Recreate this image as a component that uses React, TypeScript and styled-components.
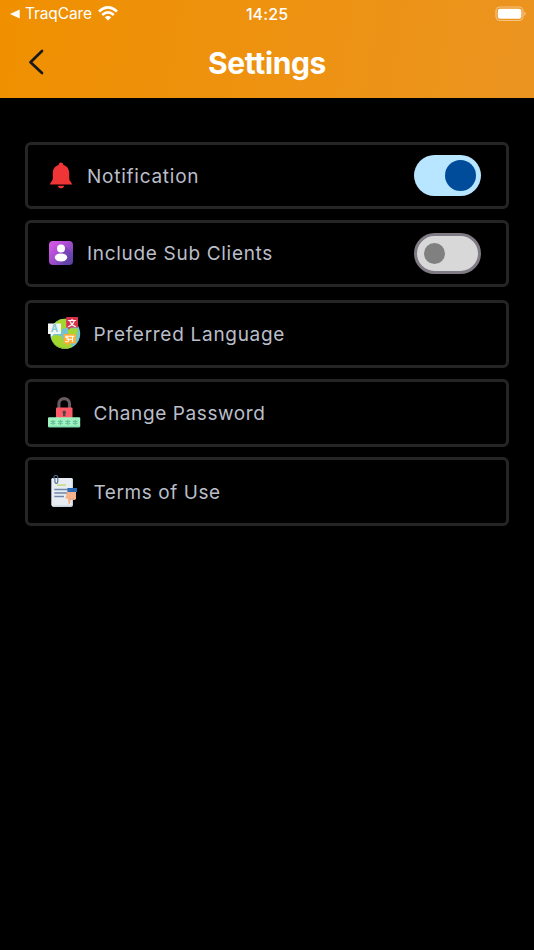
import React from 'react';
import styled, { createGlobalStyle } from 'styled-components';

const GlobalStyle = createGlobalStyle`
  * { box-sizing: border-box; }
  body { margin: 0; background: #000; font-family: Inter, 'Liberation Sans', sans-serif; }
  svg { display: block; flex: none; }
`;

const Screen = styled.div`
  display: flex;
  flex-direction: column;
  min-height: 950px;
  background: #000;
`;

const Header = styled.header`
  height: 98px;
  background: linear-gradient(100deg, #f09000, #eb9420);
`;

const StatusBar = styled.div`
  display: grid;
  grid-template-columns: 1fr auto 1fr;
  align-items: center;
  height: 27px;
  padding: 0 7px 0 10px;
  color: #fff;
`;

const BackToApp = styled.div`
  display: flex;
  align-items: center;
  font-size: 15.5px;
  line-height: 20px;
  letter-spacing: -0.1px;
  span { width: 73px; margin-left: 5px; white-space: nowrap; }
`;

const Clock = styled.time`
  margin-left: -3px;
  font-size: 16px;
  font-weight: 500;
  line-height: 20px;
  letter-spacing: 0.1px;
`;

const Battery = styled.div`
  justify-self: end;
`;

const TitleBar = styled.div`
  display: grid;
  grid-template-columns: 1fr auto 1fr;
  align-items: center;
  height: 72px;
  padding: 0 28px;
`;

const BackButton = styled.button`
  justify-self: start;
  padding: 0;
  border: 0;
  background: none;
  margin-top: -2px;
`;

const Title = styled.h1`
  margin: 0;
  color: #fff;
  font-size: 30px;
  font-weight: 700;
  line-height: 36px;
  letter-spacing: -0.4px;
`;

const List = styled.main`
  display: flex;
  flex-direction: column;
  padding: 44px 25px 0;
`;

const Group = styled.section<{ $gap: number; $top?: number }>`
  display: flex;
  flex-direction: column;
  gap: ${(p) => p.$gap}px;
  margin-top: ${(p) => p.$top ?? 0}px;
`;

const Row = styled.div<{ $link?: boolean }>`
  display: flex;
  align-items: center;
  gap: ${(p) => (p.$link ? 12.5 : 14)}px;
  height: ${(p) => (p.$link ? 68.3 : 67.2)}px;
  padding: 0 25px 0 ${(p) => (p.$link ? 20 : 21)}px;
  border: 3px solid #252526;
  border-radius: 6px;
`;

const Label = styled.span<{ $spacing: number }>`
  flex: 1;
  padding-top: 2px;
  color: #babec9;
  font-size: 19px;
  line-height: 24px;
  letter-spacing: ${(p) => p.$spacing}px;
`;

const Switch = styled.button<{ $on: boolean }>`
  display: flex;
  align-items: center;
  justify-content: ${(p) => (p.$on ? 'flex-end' : 'flex-start')};
  width: 67px;
  height: 41px;
  padding: ${(p) => (p.$on ? '0 5px' : '0 7px')};
  border: ${(p) => (p.$on ? '0' : '3px solid #7f7a84')};
  border-radius: 21px;
  background: ${(p) => (p.$on ? '#b8e5ff' : '#d8d8d8')};
`;

const Knob = styled.span<{ $on: boolean }>`
  width: ${(p) => (p.$on ? 31 : 21)}px;
  height: ${(p) => (p.$on ? 31 : 21)}px;
  border-radius: 50%;
  background: ${(p) => (p.$on ? '#004c9b' : '#808080')};
`;

const WifiIcon = () => (
  <svg width="20" height="15" viewBox="0 0 20 15" fill="none" stroke="#fff" strokeWidth="2.6">
    <path d="M1 5.5Q10-2.6 19 5.5" />
    <path d="M4.2 8.9Q10 3.8 15.8 8.9" />
    <path d="M6.7 11.3Q10 8.5 13.3 11.3L10 14.6Z" fill="#fff" stroke="none" />
  </svg>
);

const BatteryIcon = () => (
  <svg width="32" height="16" viewBox="0 0 32 16">
    <rect x="1" y="1" width="27" height="13.5" rx="4" fill="none" stroke="#fff" strokeOpacity=".45" strokeWidth="1.2" />
    <rect x="2.8" y="2.8" width="23.6" height="10" rx="2.3" fill="#fff" />
    <path d="M29.4 5.5Q32 7.7 29.4 10Z" fill="#fff" fillOpacity=".5" />
  </svg>
);

const BellIcon = () => (
  <svg width="24" height="27" viewBox="0 0 24 27" fill="#ef3535">
    <path d="M12 .5C10.5.5 9.7 1.6 9.6 2.9 5.6 4 3.8 7.2 3.8 11.2V16.5C3.8 19.1 1.3 20.2.8 22.6H23.2C22.7 20.2 20.2 19.1 20.2 16.5V11.2C20.2 7.2 18.4 4 14.4 2.9 14.3 1.6 13.5.5 12 .5ZM8.8 23.8H15.2C14.6 27.2 9.4 27.2 8.8 23.8Z" />
  </svg>
);

const ClientsIcon = () => (
  <svg width="24" height="24" viewBox="0 0 24 24">
    <defs>
      <linearGradient id="clients" x1="0" y1="0" x2="1" y2="1">
        <stop stopColor="#df5bea" />
        <stop offset=".5" stopColor="#a04ccd" />
        <stop offset="1" stopColor="#5145a3" />
      </linearGradient>
    </defs>
    <rect width="24" height="24" rx="4" fill="url(#clients)" />
    <path d="M15 4.5 24 13V20Q24 24 20 24H15L8 20Z" fill="#523e9e" opacity=".35" />
    <circle cx="12" cy="7.4" r="4" fill="#fff" />
    <ellipse cx="12" cy="16.4" rx="6.2" ry="4" fill="#fff" />
  </svg>
);

const LanguageIcon = () => (
  <svg width="33" height="33" viewBox="0 0 33 33" fontFamily="Inter, 'Noto Sans CJK SC', sans-serif" fontWeight="700">
    <defs>
      <clipPath id="globe"><circle cx="17.2" cy="16.8" r="15" /></clipPath>
    </defs>
    <circle cx="17.2" cy="16.8" r="15" fill="#73c2d1" />
    <g clipPath="url(#globe)" fill="#a3d62f">
      <path d="M5 4 12 1 22 2 22 8 18 11 14 12 13 16 8 15 5 10Z" />
      <path d="M3 20 7 18 13 19 16 25 23 27 24 30 19 33 7 31Z" />
      <path d="M20 13 23 11 30 12 29 16 28 22 26 24 20 21Z" />
      <path d="M4 23Q8 31 19 31L17 33H6Z" fill="#84bd32" />
    </g>
    <path d="M0 6.5H13V17H6L3 20V17H0Z" fill="#f3f5f5" />
    <path d="M18.2 0H30V10.5H23L20.3 13V10.5H18.2Z" fill="#d6304b" />
    <path d="M15.5 17H27.7V26.5H21L18.4 29V26.5H15.5Z" fill="#ffad37" />
    <text x="6.4" y="15.3" fontSize="10" textAnchor="middle" fill="#83c8d3">A</text>
    <text x="24.1" y="8.5" fontSize="8.5" textAnchor="middle" fill="#fff">文</text>
    <g fill="none" stroke="#fff" strokeWidth="1.1">
      <path d="M17 19.2H26.3M24.5 19.2V25M17.5 20.7Q21 20 20 22L18.5 22.3Q21.8 22 20.2 24.4 18.5 25.5 17.2 24M20.7 22.3H24.5" />
    </g>
  </svg>
);

const PasswordIcon = () => (
  <svg width="33" height="33" viewBox="0 0 33 33">
    <path d="M10.9 12V7.8C10.9.9 21.5.9 21.5 7.8V12" fill="none" stroke="#675b64" strokeWidth="3.1" />
    <rect x="8" y="11.5" width="16.5" height="11" rx="1" fill="#ff5967" />
    <path d="M15 20.3V17.6A1.8 1.8 0 1 1 17.5 17.6V20.3Z" fill="#54434a" />
    <rect x="0" y="21.2" width="32.2" height="10" rx="1" fill="#9ef3be" />
    <path d="M0 29.7H32.2V30.2Q32.2 31.2 31.2 31.2H1Q0 31.2 0 30.2Z" fill="#80dfae" />
    <g stroke="#65bc9b" strokeWidth="1.1">
      {[5, 12.4, 19.8, 27.2].map((x) => (
        <path key={x} d={`M${x} 23.8V29M${x - 2.3} 25.1L${x + 2.3} 27.7M${x + 2.3} 25.1L${x - 2.3} 27.7`} />
      ))}
    </g>
  </svg>
);

const TermsIcon = () => (
  <svg width="33" height="33" viewBox="0 0 33 33">
    <path d="M3.3 4.4Q3.3 3 5 3H23.5Q25 3 25 4.5V29.5L22.8 32H6Q4 32 3.3 30Z" fill="#e8ecf3" />
    <path d="M5 30.5H23.8V5H25V29.5Q25 32 22.5 32H6Z" fill="#c9d2df" />
    <path d="M6 3.7V1.8C6 0 9.8 0 9.8 2V6.5C9.8 9 6.9 9 6.9 6.6V3.6" fill="none" stroke="#516b91" strokeWidth="1.1" />
    <path d="M9 10.1H18" stroke="#bfd45b" strokeWidth="1.2" />
    <path d="M6.3 14.5H20M6.3 18H20M6.3 21.6H16" stroke="#7187a8" strokeWidth="1.5" />
    <path d="M19.5 16H28V24L26.5 25H22.5V27Q22 29 20.6 29.5L20 24 17.3 23.2Z" fill="#f6b28a" />
    <path d="M22.5 23V25M25 23V25" stroke="#df946d" strokeWidth=".6" />
    <path d="M19.5 13H29V17H19.5Z" fill="#2865b2" />
    <circle cx="21.3" cy="15" r=".6" fill="#74a5dd" />
  </svg>
);

const toggles = [
  { label: 'Notification', icon: <BellIcon />, on: true, spacing: 0.75 },
  { label: 'Include Sub Clients', icon: <ClientsIcon />, on: false, spacing: 0.69 },
];

const links = [
  { label: 'Preferred Language', icon: <LanguageIcon />, spacing: 0.71 },
  { label: 'Change Password', icon: <PasswordIcon />, spacing: 0.6 },
  { label: 'Terms of Use', icon: <TermsIcon />, spacing: 0.57 },
];

export default function App() {
  return (
    <Screen>
      <GlobalStyle />
      <Header>
        <StatusBar>
          <BackToApp>
            <svg width="10" height="10" viewBox="0 0 10 10"><path d="M0 5 9.7.5V9.5Z" fill="#fff" /></svg>
            <span>TraqCare</span>
            <WifiIcon />
          </BackToApp>
          <Clock>14:25</Clock>
          <Battery><BatteryIcon /></Battery>
        </StatusBar>
        <TitleBar>
          <BackButton aria-label="Back">
            <svg width="17" height="26" viewBox="0 0 17 26" fill="none" stroke="#191a20" strokeWidth="2.7" strokeLinecap="round" strokeLinejoin="round">
              <path d="M14 2 2.5 13.2 14 24" />
            </svg>
          </BackButton>
          <Title>Settings</Title>
        </TitleBar>
      </Header>
      <List>
        <Group $gap={10.5}>
          {toggles.map((t) => (
            <Row key={t.label}>
              {t.icon}
              <Label $spacing={t.spacing}>{t.label}</Label>
              <Switch $on={t.on} role="switch" aria-checked={t.on} aria-label={t.label}>
                <Knob $on={t.on} />
              </Switch>
            </Row>
          ))}
        </Group>
        <Group $gap={10.5} $top={12.9}>
          {links.map((l) => (
            <Row key={l.label} $link>
              {l.icon}
              <Label $spacing={l.spacing}>{l.label}</Label>
            </Row>
          ))}
        </Group>
      </List>
    </Screen>
  );
}
